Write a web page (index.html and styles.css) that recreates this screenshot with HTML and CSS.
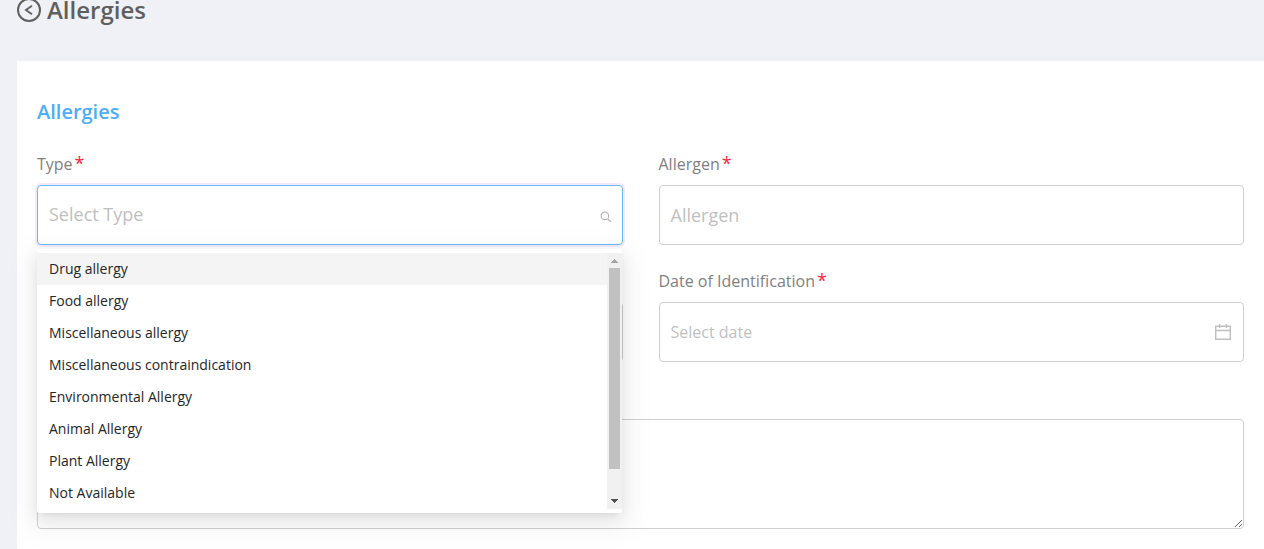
FILE: index.html
```html
<!DOCTYPE html>
<html lang="en">
<head>
<meta charset="utf-8">
<title>Allergies</title>
<link rel="stylesheet" href="styles.css">
</head>
<body>
<header class="page-header">
  <svg class="back" width="24" height="24" viewBox="0 0 24 24" fill="none" stroke="#5f5f5f"><circle cx="12" cy="12" r="11" stroke-width="2"/><path d="M15 7.8 8.9 12l6.1 4.2" stroke-width="1.8"/></svg>
  <h1 class="page-title">Allergies</h1>
</header>
<main class="card">
  <h2 class="section-title">Allergies</h2>
  <form class="form">
    <div class="field">
      <div class="label">Type<span class="required">*</span></div>
      <div class="control select">
        <span class="placeholder select-text">Select Type</span>
        <svg class="search" width="12" height="12" viewBox="0 0 12 12" fill="none" stroke="#b8b8b8" stroke-width="1.2"><circle cx="4.9" cy="4.9" r="3.8"/><path d="m7.7 7.7 3.4 3.2"/></svg>
        <div class="dropdown">
          <ul class="options">
            <li class="option active">Drug allergy</li>
            <li class="option">Food allergy</li>
            <li class="option">Miscellaneous allergy</li>
            <li class="option">Miscellaneous contraindication</li>
            <li class="option">Environmental Allergy</li>
            <li class="option">Animal Allergy</li>
            <li class="option">Plant Allergy</li>
            <li class="option">Not Available</li>
          </ul>
          <div class="scrollbar">
            <svg class="arrow" width="15" height="15" viewBox="0 0 15 15" shape-rendering="crispEdges"><path d="M4 10h7L7.5 6z" fill="#a3a3a3"/></svg>
            <div class="thumb"></div>
            <svg class="arrow" width="15" height="15" viewBox="0 0 15 15" shape-rendering="crispEdges"><path d="M4 5h7L7.5 9z" fill="#505050"/></svg>
          </div>
        </div>
      </div>
    </div>
    <div class="field">
      <div class="label">Allergen<span class="required">*</span></div>
      <div class="control"><span class="placeholder">Allergen</span></div>
    </div>
    <div class="field">
      <div class="label"></div>
      <div class="control"></div>
    </div>
    <div class="field">
      <div class="label">Date of Identification<span class="required">*</span></div>
      <div class="control">
        <span class="placeholder date-text">Select date</span>
        <svg class="calendar" width="16" height="16" viewBox="0 0 16 16" fill="none" stroke="#bfbfbf" stroke-width="1.4"><path d="M.7 2.2h14.6v13.1H.7zM.7 6.5h14.6M4.6 0v4M11.4 0v4"/></svg>
      </div>
    </div>
    <div class="field wide">
      <div class="label"></div>
      <textarea class="notes"></textarea>
    </div>
  </form>
</main>
</body>
</html>
```
FILE: styles.css
```css
* { box-sizing: border-box; }
body {
  margin: 0;
  height: 549px;
  overflow: hidden;
  background: #f0f1f6;
  font-family: "Open Sans", "Noto Sans", sans-serif;
  font-size: 16px;
  color: #7f7f7f;
}
.page-header {
  display: flex;
  height: 61px;
  padding-left: 17px;
  gap: 6px;
}
.back { margin-top: -2px; }
.page-title {
  margin: -7px 0 0;
  font-size: 24px;
  line-height: 34px;
  font-weight: 600;
  color: #5f5f5f;
}
.card {
  margin-left: 17px;
  height: 488px;
  padding: 36px 20px 0;
  background: #fff;
}
.section-title {
  margin: 0;
  font-size: 20px;
  line-height: 30px;
  font-weight: 600;
  color: #4dadf7;
}
.form {
  display: grid;
  grid-template-columns: 1fr 1fr;
  column-gap: 36px;
  row-gap: 17px;
  padding-top: 18px;
}
.wide { grid-column: span 2; }
.label {
  height: 40px;
  line-height: 39px;
}
.required {
  margin-left: 2px;
  font-size: 18px;
  line-height: 1;
  color: #ff1f3d;
}
.control {
  position: relative;
  display: flex;
  align-items: center;
  justify-content: space-between;
  height: 60px;
  padding: 0 11px;
  border: 1px solid #d0d0d0;
  border-radius: 4px;
  background: #fff;
}
.select {
  border-color: #62bdf8;
  box-shadow: 0 0 0 2px #f5e8f8;
}
.placeholder {
  font-size: 18px;
  color: #bfbfbf;
}
.select-text { margin-top: -2px; }
.date-text { font-size: 16px; }
.search { margin: 4px -1px 0 0; }
.calendar { margin-right: 1px; }
.notes {
  display: block;
  width: 100%;
  height: 110px;
  border: 1px solid #d0d0d0;
  border-radius: 4px;
  background: #fff;
  resize: vertical;
}
.dropdown {
  position: absolute;
  z-index: 2;
  top: 63px;
  left: -1px;
  width: 585px;
  display: flex;
  padding: 4px 0;
  border-radius: 2px;
  background: #fff;
  box-shadow: 0 3px 6px -4px rgba(0,0,0,.12), 0 6px 16px rgba(0,0,0,.08), 0 9px 28px 8px rgba(0,0,0,.05);
}
.options {
  flex: 1;
  margin: 0;
  padding: 0;
  list-style: none;
}
.option {
  height: 32px;
  padding: 0 12px;
  font-size: 14px;
  line-height: 32px;
  color: #262626;
}
.active { background: #f4f4f4; }
.scrollbar {
  display: flex;
  flex-direction: column;
  justify-content: space-between;
  width: 15px;
  background: #f1f1f1;
}
.arrow { display: block; }
.thumb {
  height: 201px;
  margin: 0 2px auto;
  background: #c1c1c1;
}
```
